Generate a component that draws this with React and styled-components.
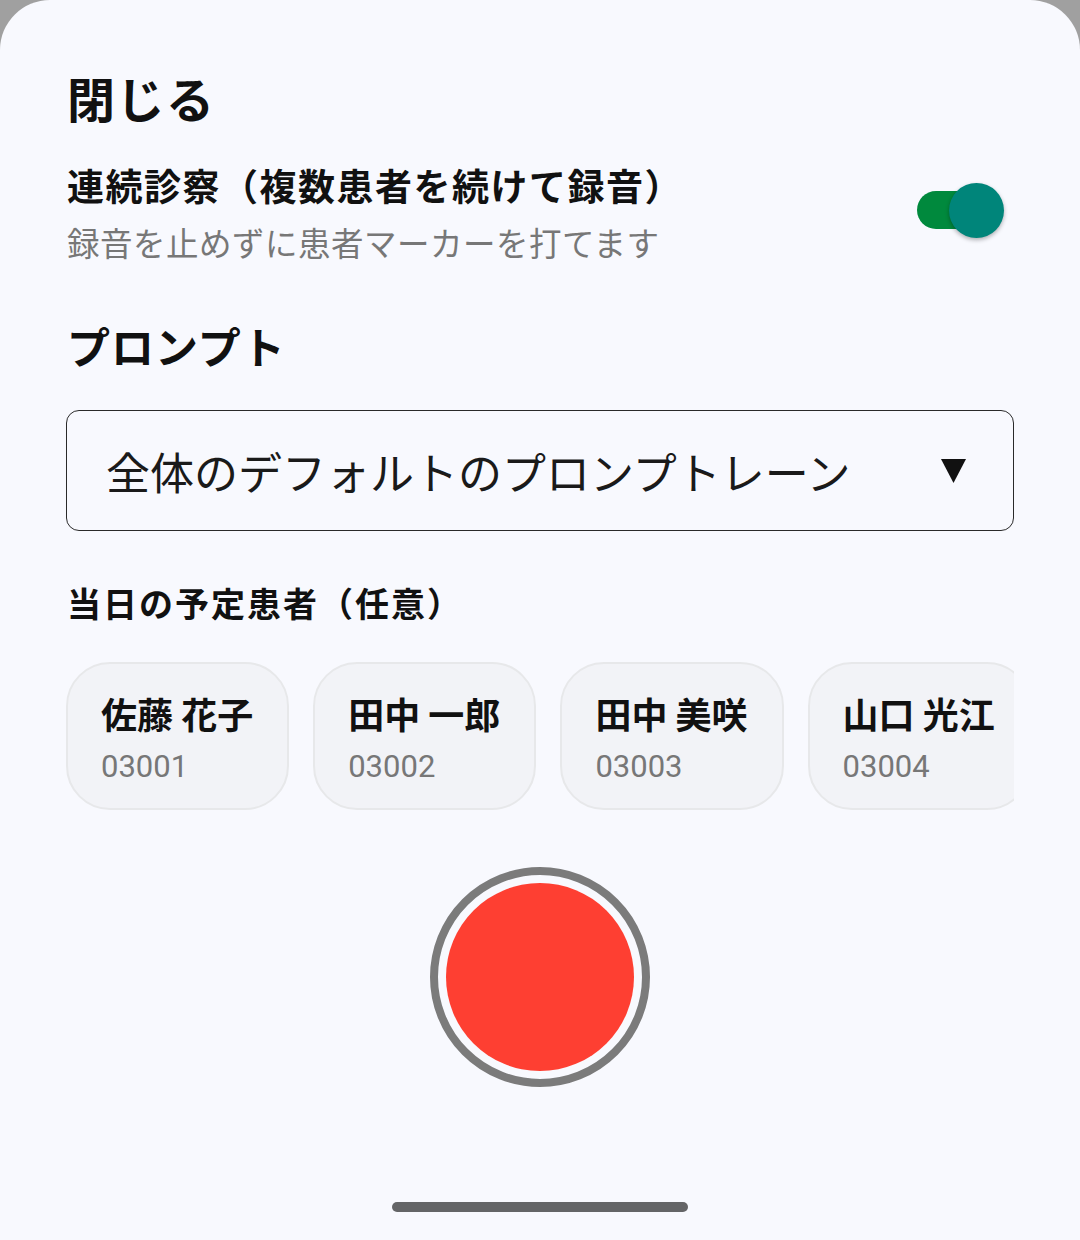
import React from 'react'
import styled, { createGlobalStyle } from 'styled-components'

const GlobalStyle = createGlobalStyle`
  html, body {
    margin: 0;
    padding: 0;
    background: #a0a0a0;
  }
  * {
    box-sizing: border-box;
  }
`

const jp = `"Noto Sans CJK JP", "Noto Sans", sans-serif`

const Sheet = styled.div`
  min-height: 1240px;
  background: #f8f9fe;
  border-radius: 50px 50px 0 0;
  padding: 69px 66px 0;
  display: flex;
  flex-direction: column;
  font-family: ${jp};
  color: #111;
`

const Title = styled.div`
  font-size: 48px;
  line-height: 56px;
  font-weight: 700;
  letter-spacing: 1.5px;
  padding-left: 1px;
`

const SettingRow = styled.div`
  margin-top: 36px;
  display: flex;
  align-items: center;
  justify-content: space-between;
`

const SettingText = styled.div`
  display: flex;
  flex-direction: column;
  padding-left: 1px;
`

const SettingName = styled.div`
  font-size: 37px;
  line-height: 48px;
  font-weight: 700;
  letter-spacing: 1.5px;
`

const SettingHint = styled.div`
  margin-top: 11px;
  font-size: 32.5px;
  line-height: 44px;
  letter-spacing: 0.5px;
  color: #777;
`

const Switch = styled.div`
  position: relative;
  width: 87px;
  height: 55px;
  margin-right: 10px;
  margin-top: -5px;
`

const Track = styled.div`
  position: absolute;
  left: 0;
  top: 8px;
  width: 80px;
  height: 38px;
  border-radius: 19px;
  background: #00893d;
`

const Thumb = styled.div`
  position: absolute;
  right: 0;
  top: 0;
  width: 55px;
  height: 55px;
  border-radius: 50%;
  background: #00857a;
  box-shadow: 0 2px 4px rgba(0, 0, 0, 0.3);
`

const SectionTitle = styled.div`
  margin-top: 55px;
  font-size: 43px;
  line-height: 52px;
  font-weight: 700;
  letter-spacing: 1px;
  padding-left: 1px;
`

const Select = styled.div`
  margin-top: 39px;
  height: 121px;
  border: 1.5px solid #2a2a2a;
  border-radius: 13px;
  display: flex;
  align-items: center;
  justify-content: space-between;
  padding: 0 47px 0 39px;
`

const SelectValue = styled.span`
  font-size: 44px;
  line-height: 56px;
  color: #1a1a1a;
`

const Caret = styled.svg`
  width: 25px;
  height: 25px;
  display: block;
`

const SubTitle = styled.div`
  margin-top: 50px;
  font-size: 34px;
  line-height: 44px;
  font-weight: 700;
  letter-spacing: 2px;
  padding-left: 1px;
`

const ChipRow = styled.div`
  margin-top: 37px;
  display: flex;
  gap: 24px;
  overflow: hidden;
`

const Chip = styled.div`
  flex-shrink: 0;
  height: 148px;
  border: 2px solid #e7e8ea;
  border-radius: 44px;
  background: #f2f3f7;
  padding: 27px 34px 0 33px;
  display: flex;
  flex-direction: column;
`

const ChipName = styled.div`
  font-size: 36px;
  line-height: 44px;
  font-weight: 700;
  white-space: nowrap;
`

const ChipId = styled.div`
  margin-top: 12px;
  font-family: Roboto, sans-serif;
  font-size: 31px;
  line-height: 40px;
  color: #777;
`

const RecordWrap = styled.div`
  margin-top: 57px;
  display: flex;
  justify-content: center;
`

const RecordRing = styled.button`
  width: 220px;
  height: 220px;
  border-radius: 50%;
  border: 8px solid #7b7b7b;
  background: transparent;
  padding: 8px;
  margin: 0;
  cursor: pointer;
  display: flex;
`

const RecordDot = styled.span`
  flex: 1;
  border-radius: 50%;
  background: #fe3f32;
`

const HomeBar = styled.div`
  margin: 115px auto 0;
  width: 296px;
  height: 10px;
  border-radius: 5px;
  background: #646567;
`

const patients = [
  { name: '佐藤 花子', id: '03001' },
  { name: '田中 一郎', id: '03002' },
  { name: '田中 美咲', id: '03003' },
  { name: '山口 光江', id: '03004' },
]

export default function App() {
  return (
    <>
      <GlobalStyle />
      <Sheet>
        <Title>閉じる</Title>

        <SettingRow>
          <SettingText>
            <SettingName>連続診察（複数患者を続けて録音）</SettingName>
            <SettingHint>録音を止めずに患者マーカーを打てます</SettingHint>
          </SettingText>
          <Switch>
            <Track />
            <Thumb />
          </Switch>
        </SettingRow>

        <SectionTitle>プロンプト</SectionTitle>
        <Select>
          <SelectValue>全体のデフォルトのプロンプトレーン</SelectValue>
          <Caret viewBox="0 0 25 25">
            <polygon points="0,1 25,1 12.5,25" fill="#111" />
          </Caret>
        </Select>

        <SubTitle>当日の予定患者（任意）</SubTitle>
        <ChipRow>
          {patients.map((p) => (
            <Chip key={p.id}>
              <ChipName>{p.name}</ChipName>
              <ChipId>{p.id}</ChipId>
            </Chip>
          ))}
        </ChipRow>

        <RecordWrap>
          <RecordRing aria-label="録音">
            <RecordDot />
          </RecordRing>
        </RecordWrap>

        <HomeBar />
      </Sheet>
    </>
  )
}
